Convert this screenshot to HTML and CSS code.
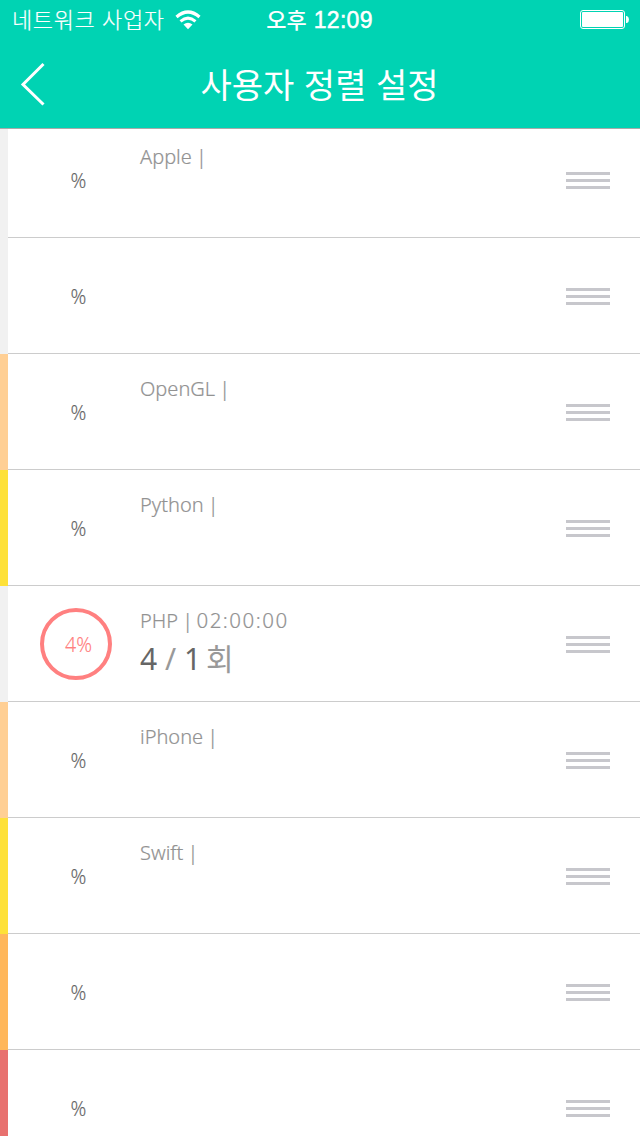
FILE: index.html
```html
<!DOCTYPE html>
<html lang="ko">
<head>
<meta charset="utf-8">
<title>사용자 정렬 설정</title>
<link rel="stylesheet" href="styles.css">
</head>
<body>
<header class="header">
  <div class="status">
    <div class="carrier"><span class="carrier-name">네트워크 사업자</span>
      <svg class="wifi" width="26" height="20" viewBox="0 0 26 20"><path d="M1.500 7Q13-3 24.500 7" fill="none" stroke="#fff" stroke-width="3.200"/><path d="M5.500 11.300Q13 5 20.500 11.300" fill="none" stroke="#fff" stroke-width="3"/><path d="M8.500 14.600Q13 11 17.500 14.600L13 19.200Z" fill="#fff"/></svg>
    </div>
    <div class="time"><span>오후</span><span class="clock">12:09</span></div>
    <svg class="battery" width="50" height="20" viewBox="0 0 50 20"><rect x=".5" y=".5" width="44" height="18" rx="2.5" fill="none" stroke="#fff"/><rect x="2" y="2" width="41" height="15" rx="1" fill="#fff"/><path d="M46 6h1q2 1 2 3.500t-2 3.500h-1z" fill="#fff"/></svg>
  </div>
  <div class="nav">
    <svg class="back" width="26" height="44" viewBox="0 0 26 44"><path d="M23.500 2L3 22.500L23.500 42.500" fill="none" stroke="#fff" stroke-width="3"/></svg>
    <h1 class="title">사용자 정렬 설정</h1>
  </div>
</header>
<main class="list">
  <div class="row gray"><div class="cell"><div class="ring">%</div><div class="info"><p class="name">Apple <span class="bar">|</span></p></div><div class="grip"><i></i><i></i><i></i></div></div></div>
  <div class="row gray"><div class="cell"><div class="ring">%</div><div class="info"></div><div class="grip"><i></i><i></i><i></i></div></div></div>
  <div class="row peach"><div class="cell"><div class="ring">%</div><div class="info"><p class="name">OpenGL <span class="bar">|</span></p></div><div class="grip"><i></i><i></i><i></i></div></div></div>
  <div class="row yellow"><div class="cell"><div class="ring">%</div><div class="info"><p class="name">Python <span class="bar">|</span></p></div><div class="grip"><i></i><i></i><i></i></div></div></div>
  <div class="row gray"><div class="cell"><div class="ring active">4%</div><div class="info"><p class="name">PHP <span class="bar">|</span> <span class="duration">02:00:00</span></p><p class="count"><b>4</b> / <b>1</b> <span class="unit">회</span></p></div><div class="grip"><i></i><i></i><i></i></div></div></div>
  <div class="row peach"><div class="cell"><div class="ring">%</div><div class="info"><p class="name">iPhone <span class="bar">|</span></p></div><div class="grip"><i></i><i></i><i></i></div></div></div>
  <div class="row yellow"><div class="cell"><div class="ring">%</div><div class="info"><p class="name">Swift <span class="bar">|</span></p></div><div class="grip"><i></i><i></i><i></i></div></div></div>
  <div class="row orange"><div class="cell"><div class="ring">%</div><div class="info"></div><div class="grip"><i></i><i></i><i></i></div></div></div>
  <div class="row red"><div class="cell"><div class="ring">%</div><div class="info"></div><div class="grip"><i></i><i></i><i></i></div></div></div>
</main>
</body>
</html>
```
FILE: styles.css
```css
* { box-sizing: border-box; margin: 0; padding: 0; }
body { height: 1136px; overflow: hidden; background: #fff; font-family: "Noto Sans", "Noto Sans CJK KR", sans-serif; }
.header { position: relative; z-index: 1; height: 129px; background: #00d3b3; border-bottom: 1px solid #a9aaa9; color: #fff; }
.status { display: grid; grid-template-columns: 1fr auto 1fr; height: 40px; align-items: center; padding: 0 10px 0 12px; font: 300 22px/36px "Noto Sans CJK KR", sans-serif; }
.carrier { display: flex; align-items: center; gap: 10px; white-space: nowrap; }
.carrier-name { padding-bottom: 4px; letter-spacing: .6px; -webkit-text-stroke: .2px #fff; }
.time { display: flex; align-items: baseline; gap: 7px; padding: 0 3px 2px 0; font-weight: 500; white-space: nowrap; }
.clock { font: 400 23px/36px "Liberation Sans", sans-serif; letter-spacing: .3px; -webkit-text-stroke: .5px #fff; }
.battery { justify-self: end; }
.nav { display: grid; grid-template-columns: 26px 1fr 26px; align-items: center; height: 88px; padding: 0 20px; }
.title { padding-right: 1px; text-align: center; font: 400 34px/88px "Noto Sans CJK KR", sans-serif; }
.list { margin-top: -7px; }
.row { height: 116px; padding-left: 8px; }
.gray { background: #f1f1f1; }
.peach { background: #ffcf94; }
.yellow { background: #fee138; }
.orange { background: #ffb75b; }
.red { background: #e8716f; }
.cell { display: flex; align-items: center; height: 116px; padding: 0 30px 0 32px; background: #fff; border-bottom: 1px solid #ccc; }
.ring { width: 72px; height: 72px; padding-left: 5px; text-align: center; font-weight: 300; font-size: 19.5px; line-height: 73px; color: #666; -webkit-text-stroke: .15px currentColor; }
.active { border: 4px solid #ff8080; border-radius: 50%; color: #ff8080; line-height: 65px; }
.info { align-self: stretch; flex: 1; padding: 20px 0 0 28px; }
.name { font-weight: 300; font-size: 20px; line-height: 30px; color: #929292; white-space: nowrap; -webkit-text-stroke: .2px currentColor; }
.bar { display: inline-block; width: 9px; line-height: 28px; text-indent: -1px; }
.duration { font-size: 20.5px; line-height: 28px; letter-spacing: 1.5px; margin-left: -1px; }
.count { font-size: 30px; line-height: 42px; color: #999; white-space: nowrap; }
.count b { font-weight: 400; color: #666; }
.unit { display: inline-block; margin-left: -3px; font-family: "Noto Sans CJK KR", sans-serif; line-height: 42px; }
.grip { display: flex; flex-direction: column; gap: 4px; width: 44px; padding-top: 1px; }
.grip i { height: 3px; background: #c7c7cc; }
```
